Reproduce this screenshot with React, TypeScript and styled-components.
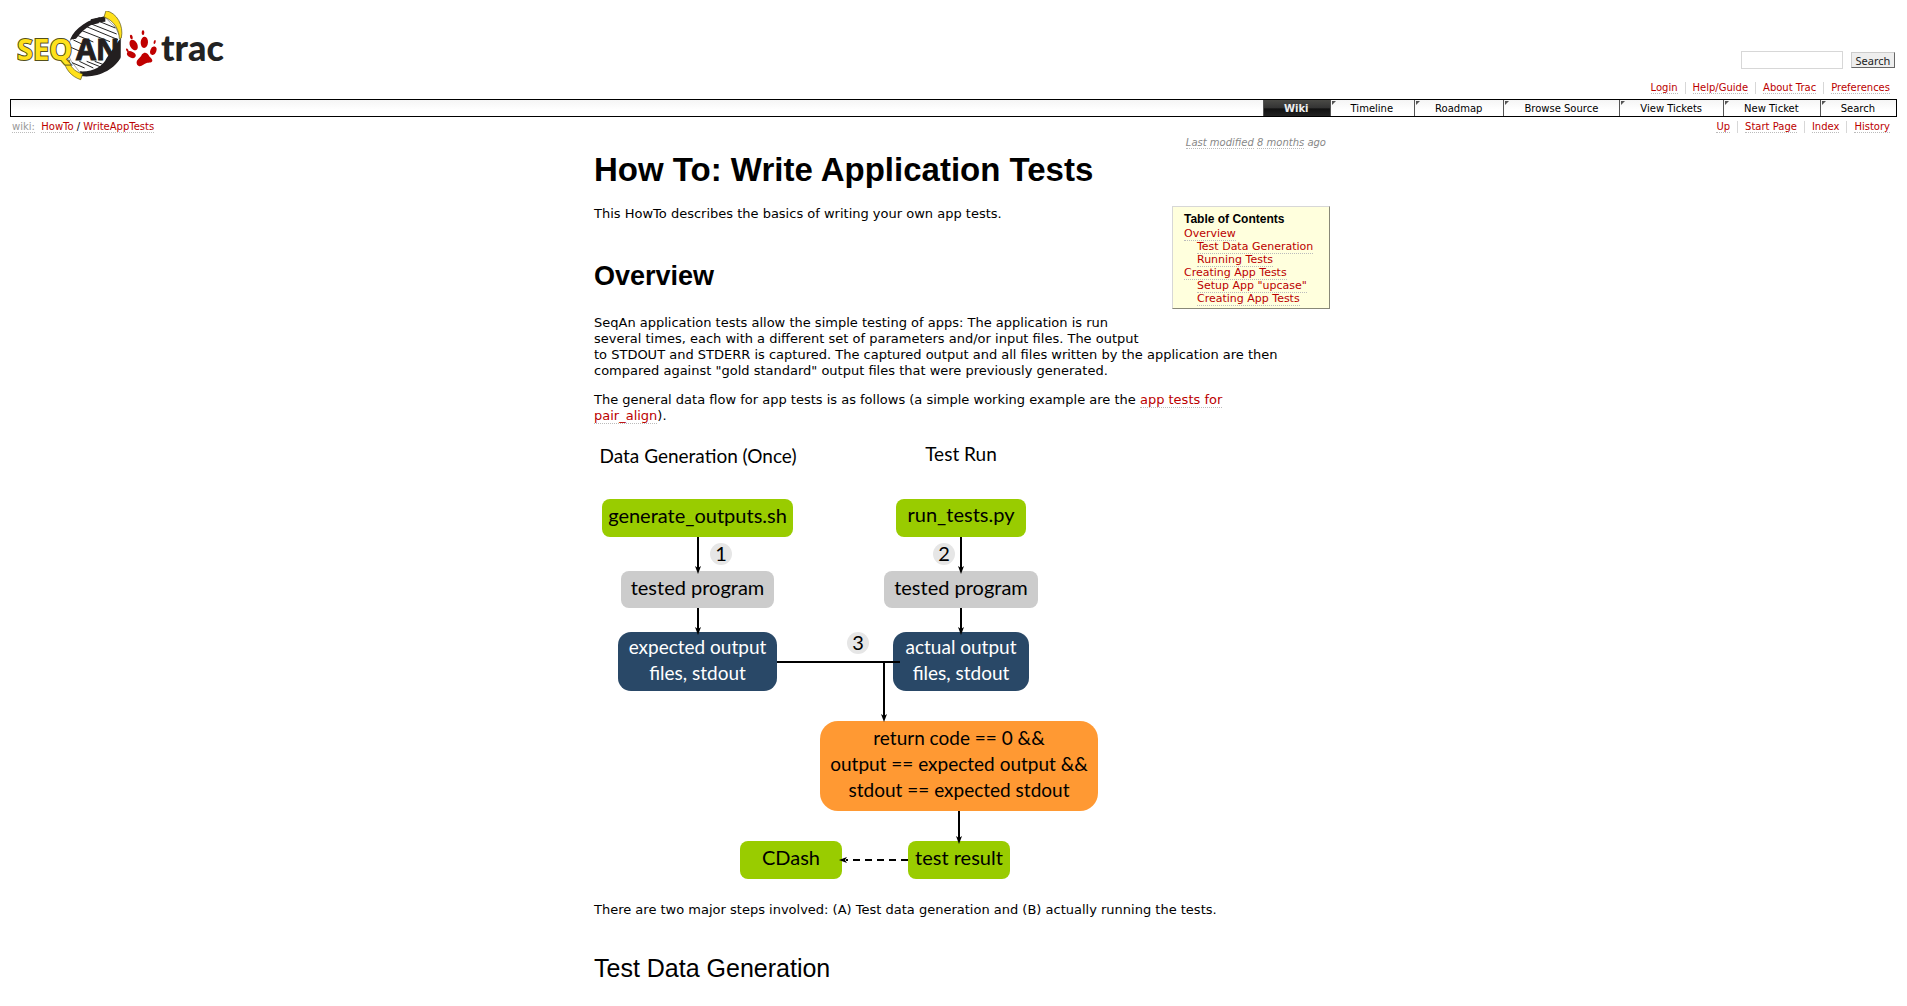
import React from 'react';
import styled, { createGlobalStyle, css } from 'styled-components';

const sans = '"DejaVu Sans", "Bitstream Vera Sans", sans-serif';
const heading = '"Liberation Sans", Arial, sans-serif';

const GlobalStyle = createGlobalStyle`
  body {
    margin: 10px;
    background: #fff;
    color: #000;
    font: 13px/16px ${sans};
  }
`;

const Link = styled.a`
  color: #b00;
  text-decoration: none;
  border-bottom: 1px dotted #bbb;
`;

const Banner = styled.header`
  display: flex;
  justify-content: space-between;
  height: 72px;
`;

const LogoLink = styled.a`
  display: block;
  padding: 1px 7px;
`;

const SearchForm = styled.form`
  display: flex;
  align-items: center;
  align-self: flex-end;
  gap: 8px;
  padding: 0 2px 13px 0;
`;

const SearchInput = styled.input`
  box-sizing: border-box;
  width: 102px;
  height: 18px;
  padding: 0 2px;
  border: 1px solid #d7d7d7;
  background: #fff;
  font: 11px ${sans};
`;

const SearchButton = styled.button`
  box-sizing: border-box;
  height: 16px;
  width: 44px;
  padding: 0;
  border: 1px solid;
  border-color: #ccc #666 #666 #ccc;
  background: #eee;
  color: #222;
  font: 11px/13px "Noto Sans", sans-serif;
`;

const LinkList = styled.ul<{ $tall?: boolean }>`
  display: flex;
  justify-content: flex-end;
  margin: 0;
  padding: 0 7px 0 0;
  list-style: none;
  font-size: 10px;
  line-height: 12px;
  height: ${(p) => (p.$tall ? 17 : 14)}px;

  li {
    height: 12px;
    padding: 0 7px;
    border-left: 1px solid #d7d7d7;
  }
  li:first-child {
    border-left: 0;
  }
  li:last-child {
    padding-right: 0;
  }
`;

const MainNav = styled.nav`
  border: 1px solid #000;
  background: linear-gradient(#f5f5f5, #fff 60%);

  ul {
    display: flex;
    justify-content: flex-end;
    margin: 0;
    padding: 0;
    list-style: none;
  }
`;

const Tab = styled.a<{ $active?: boolean }>`
  position: relative;
  display: block;
  padding: 2px 21px 0 20px;
  border-left: 1px solid #555;
  color: #000;
  font-size: 10px;
  line-height: 14px;
  text-decoration: none;

  ${(p) =>
    p.$active
      ? css`
          background: linear-gradient(#4a4a46, #333 50%, #111 55%, #222);
          color: #eee;
          font-weight: bold;
        `
      : css`
          &::before {
            content: '';
            position: absolute;
            top: 1px;
            left: 1px;
            border-top: 4px solid #555;
            border-right: 4px solid transparent;
          }
        `}
`;

const SubBar = styled.div`
  display: flex;
  justify-content: space-between;
  padding-top: 4px;
  height: 16px;
`;

const Path = styled.nav`
  padding-left: 2px;
  color: #999;
  font-size: 10px;
  line-height: 12px;

  em {
    color: #000;
    font-style: normal;
  }
`;

const Muted = styled.a`
  color: inherit;
  text-decoration: none;
  border-bottom: 1px dotted #bbb;
`;

const Content = styled.main`
  box-sizing: border-box;
  max-width: 753px;
  margin: 0 auto;
  padding-left: 17px;
`;

const Modified = styled.p`
  margin: 0;
  padding-right: 4px;
  text-align: right;
  color: #888;
  font-size: 10px;
  line-height: 12px;
  font-style: italic;
`;

const Title = styled.h1`
  margin: 0;
  padding: 3px 0 18px;
  font: bold 33px/36px ${heading};
`;

const Section = styled.h2`
  margin: 0;
  padding: 26px 0 24px;
  font: bold 27px/30px ${heading};
`;

const SubSection = styled.h3`
  margin: 0;
  padding: 22px 0 16px;
  font: normal 25px/30px ${heading};
`;

const Paragraph = styled.p`
  margin: 0 0 13px;
`;

const Toc = styled.nav`
  float: right;
  box-sizing: border-box;
  width: 158px;
  margin: 0 0 24px 24px;
  padding: 5px 11px 3px;
  border: 1px solid;
  border-color: #d7d7d7 #887 #887 #d7d7d7;
  background: #ffd;
  font-size: 11px;
  line-height: 13px;
  white-space: nowrap;

  h4 {
    margin: 0;
    font: bold 12px/15px ${heading};
  }
  ol {
    margin: 0;
    padding: 0;
    list-style: none;
  }
  ol ol {
    padding-left: 13px;
  }
`;

const Figure = styled.svg`
  display: block;
  max-width: 100%;
  margin: 16px 0 17px;
  font-family: Lato, Carlito, sans-serif;
  font-size: 19px;
`;

const Logo = () => (
  <svg width="216" height="70" viewBox="0 0 216 70" role="img" aria-label="SeqAn trac">
    <g transform="translate(43 -3) scale(0.3333)">
      <path
        d="M32 95 C50 60 90 32 134 27 L168 60 L182 92 L180 152 C150 190 110 205 65 200 L34 160 C22 140 22 115 32 95 Z"
        fill="#fff"
        stroke="#777"
        strokeWidth="2"
      />
      <path
        d="M112 38L166 60M94 48L170 78M80 56L174 95M66 68L150 101M52 82L100 102M40 96L70 110M28 116L60 130M36 164L74 180M58 160L100 180M80 160L120 176M104 160L136 172"
        fill="none"
        stroke="#222"
        strokeWidth="3"
      />
      <path d="M30 95 C45 60 85 32 136 25 L136 41 C104 42 76 54 48 92 Z" fill="#231f20" />
      <path d="M92 34 L120 28 L116 46 L96 50 Z" fill="#231f20" />
      <path d="M182 90 L182 148 C165 185 110 212 62 204 L60 190 C100 192 128 176 140 150 Z" fill="#231f20" />
      <path
        d="M138 8 C170 14 192 52 184 90 L178 92 C178 68 164 38 132 27 Z"
        fill="#ffe11c"
        stroke="#55501a"
        strokeWidth="2"
      />
      <path
        d="M12 156 C14 182 34 206 62 215 L68 198 C42 190 30 176 28 156 Z"
        fill="#ffe11c"
        stroke="#55501a"
        strokeWidth="2"
      />
    </g>
    <g fontFamily="Open Sans, sans-serif" fontWeight="bold" fontSize="29">
      <text x="0" y="49" fill="#ffe11c" stroke="#55501a" strokeWidth="2" paintOrder="stroke">SEQ</text>
      <text x="59" y="49" fill="#231f20" stroke="#231f20" strokeWidth="1">AN</text>
    </g>
    <g fill="#c00000" transform="translate(107 17) scale(0.3333)">
      <ellipse cx="29" cy="51" rx="11" ry="17" transform="rotate(-28 29 51)" />
      <ellipse cx="61" cy="43" rx="11" ry="17" transform="rotate(4 61 43)" />
      <ellipse cx="22" cy="80" rx="14" ry="9" transform="rotate(28 22 80)" />
      <ellipse cx="88" cy="68" rx="9" ry="13" transform="rotate(20 88 68)" />
      <ellipse cx="22" cy="27" rx="4" ry="7" transform="rotate(-15 22 27)" />
      <ellipse cx="57" cy="14" rx="4" ry="7" />
      <ellipse cx="10" cy="67" rx="3" ry="6" transform="rotate(-30 10 67)" />
      <ellipse cx="92" cy="42" rx="3" ry="6" transform="rotate(15 92 42)" />
      <path d="M38 106 C36 95 50 90 54 79 C60 71 70 73 74 82 C77 89 84 91 85 97 C85 106 76 103 68 105 C60 107 52 118 44 114 C39 112 39 109 38 106 Z" />
    </g>
    <text x="144" y="50" fill="#222" fontFamily="Lato, sans-serif" fontWeight="900" fontSize="36">trac</text>
  </svg>
);

type BoxProps = {
  x: number;
  y: number;
  w: number;
  h: number;
  r?: number;
  fill: string;
  color?: string;
  lines: string[];
  baseline: number;
};

const Box = ({ x, y, w, h, r = 8, fill, color = '#000', lines, baseline }: BoxProps) => (
  <g fontSize={lines.length > 1 ? 19 : 20}>
    <rect x={x} y={y} width={w} height={h} rx={r} fill={fill} />
    {lines.map((line, i) => (
      <text key={line} x={x + w / 2} y={baseline + i * 26} fill={color} textAnchor="middle">
        {line}
      </text>
    ))}
  </g>
);

const Arrow = ({ x, from, to }: { x: number; from: number; to: number }) => (
  <g>
    <path d={`M${x} ${from}V${to - 3}`} stroke="#000" strokeWidth="2" />
    <path d={`M${x - 3} ${to - 8}L${x} ${to}L${x + 3} ${to - 8}L${x} ${to - 6}Z`} />
  </g>
);

const Step = ({ x, y, n }: { x: number; y: number; n: number }) => (
  <g fontSize="20">
    <circle cx={x} cy={y} r="11" fill="#e6e6e6" />
    <text x={x} y={y + 7} textAnchor="middle">
      {n}
    </text>
  </g>
);

const GREEN = '#9c0';
const GREY = '#ccc';
const BLUE = '#294867';
const ORANGE = '#ff9933';

const Diagram = () => (
  <Figure width="510" height="445" viewBox="0 0 510 445" role="img" aria-label="Data flow for app tests">
    <text x="104" y="23" textAnchor="middle">Data Generation (Once)</text>
    <text x="367" y="21" textAnchor="middle">Test Run</text>
    <Box x={8} y={59} w={191} h={38} fill={GREEN} lines={['generate_outputs.sh']} baseline={83} />
    <Box x={302} y={59} w={130} h={38} fill={GREEN} lines={['run_tests.py']} baseline={82} />
    <Box x={27} y={131} w={153} h={37} fill={GREY} lines={['tested program']} baseline={155} />
    <Box x={290} y={131} w={154} h={37} fill={GREY} lines={['tested program']} baseline={155} />
    <Box x={24} y={192} w={159} h={59} r={13} fill={BLUE} color="#fff" lines={['expected output', 'files, stdout']} baseline={214} />
    <Box x={299} y={192} w={136} h={59} r={13} fill={BLUE} color="#fff" lines={['actual output', 'files, stdout']} baseline={214} />
    <Box x={226} y={281} w={278} h={90} r={18} fill={ORANGE} lines={['return code == 0 &&', 'output == expected output &&', 'stdout == expected stdout']} baseline={305} />
    <Box x={314} y={401} w={102} h={38} fill={GREEN} lines={['test result']} baseline={425} />
    <Box x={146} y={401} w={102} h={38} fill={GREEN} lines={['CDash']} baseline={425} />
    <Arrow x={104} from={97} to={134} />
    <Arrow x={104} from={168} to={195} />
    <Arrow x={367} from={97} to={134} />
    <Arrow x={367} from={168} to={195} />
    <path d="M183 222H306" stroke="#000" strokeWidth="2" />
    <Arrow x={290} from={222} to={282} />
    <Arrow x={365} from={371} to={404} />
    <path d="M314 420H252" stroke="#000" strokeWidth="2" strokeDasharray="7 5" />
    <path d="M245 420L253 417L251 420L253 423Z" />
    <Step x={127} y={114} n={1} />
    <Step x={350} y={114} n={2} />
    <Step x={264} y={203} n={3} />
  </Figure>
);

const meta = ['Login', 'Help/Guide', 'About Trac', 'Preferences'];
const tabs = ['Wiki', 'Timeline', 'Roadmap', 'Browse Source', 'View Tickets', 'New Ticket', 'Search'];
const context = ['Up', 'Start Page', 'Index', 'History'];

const Links = ({ items, tall }: { items: string[]; tall?: boolean }) => (
  <LinkList $tall={tall}>
    {items.map((item) => (
      <li key={item}>
        <Link href="#">{item}</Link>
      </li>
    ))}
  </LinkList>
);

export default function App() {
  return (
    <>
      <GlobalStyle />
      <Banner>
        <LogoLink href="#">
          <Logo />
        </LogoLink>
        <SearchForm onSubmit={(e) => e.preventDefault()}>
          <SearchInput type="text" aria-label="Search" />
          <SearchButton type="submit">Search</SearchButton>
        </SearchForm>
      </Banner>
      <Links items={meta} tall />
      <MainNav>
        <ul>
          {tabs.map((tab, i) => (
            <li key={tab}>
              <Tab href="#" $active={i === 0}>
                {tab}
              </Tab>
            </li>
          ))}
        </ul>
      </MainNav>
      <SubBar>
        <Path>
          <Muted href="#">wiki:</Muted>&nbsp; <Link href="#">HowTo</Link> <em>/</em> <Link href="#">WriteAppTests</Link>
        </Path>
        <Links items={context} />
      </SubBar>
      <Content>
        <Modified>
          <Muted href="#">Last modified</Muted> <Muted href="#">8 months</Muted> ago
        </Modified>
        <Title>How To: Write Application Tests</Title>
        <Toc>
          <h4>Table of Contents</h4>
          <ol>
            <li>
              <Link href="#">Overview</Link>
              <ol>
                <li><Link href="#">Test Data Generation</Link></li>
                <li><Link href="#">Running Tests</Link></li>
              </ol>
            </li>
            <li>
              <Link href="#">Creating App Tests</Link>
              <ol>
                <li><Link href="#">Setup App "upcase"</Link></li>
                <li><Link href="#">Creating App Tests</Link></li>
              </ol>
            </li>
          </ol>
        </Toc>
        <Paragraph>This HowTo describes the basics of writing your own app tests.</Paragraph>
        <Section>Overview</Section>
        <Paragraph>
          SeqAn application tests allow the simple testing of apps: The application is run
          <br />
          several times, each with a different set of parameters and/or input files. The output
          <br />
          to STDOUT and STDERR is captured. The captured output and all files written by the application are then
          <br />
          compared against "gold standard" output files that were previously generated.
        </Paragraph>
        <Paragraph>
          The general data flow for app tests is as follows (a simple working example are the{' '}
          <Link href="#">
            app tests for
            <br />
            pair_align
          </Link>
          ).
        </Paragraph>
        <Diagram />
        <Paragraph>
          There are two major steps involved: (A) Test data generation and (B) actually running the tests.
        </Paragraph>
        <SubSection>Test Data Generation</SubSection>
      </Content>
    </>
  );
}
